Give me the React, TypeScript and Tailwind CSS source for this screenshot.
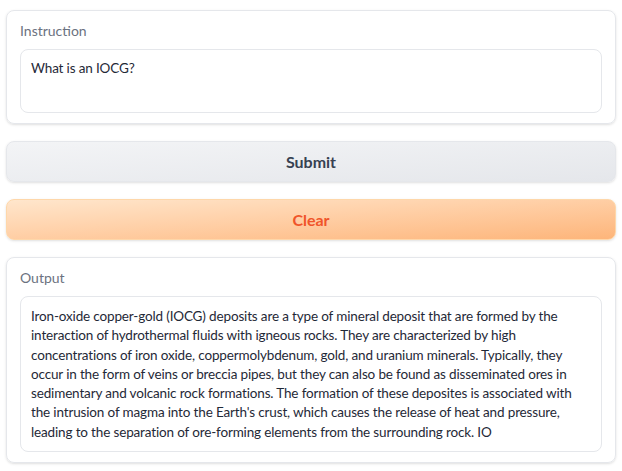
const lines = [
  "Iron-oxide copper-gold (IOCG) deposits are a type of mineral deposit that are formed by the",
  "interaction of hydrothermal fluids with igneous rocks. They are characterized by high",
  "concentrations of iron oxide, coppermolybdenum, gold, and uranium minerals. Typically, they",
  "occur in the form of veins or breccia pipes, but they can also be found as disseminated ores in",
  "sedimentary and volcanic rock formations. The formation of these deposites is associated with",
  "the intrusion of magma into the Earth's crust, which causes the release of heat and pressure,",
  "leading to the separation of ore-forming elements from the surrounding rock. IO",
];

export default function App() {
  const font = { fontFamily: '"Source Sans Pro", Lato, "Noto Sans", sans-serif' };
  return (
    <div className="w-[622px] h-[471px] bg-white px-[6px] pt-[10px]" style={font}>
      <div className="flex flex-col gap-[17px]">
        <div className="rounded-lg border border-[#e5e7eb] px-[13px] pt-[10px] pb-[10px] flex flex-col gap-[9px] shadow-sm">
          <div className="text-[14px] leading-[19px] text-[#6b7280]">Instruction</div>
          <div className="h-[64px] rounded-lg border border-[#e5e7eb] px-[10px] pt-[9px] text-[13.5px] tracking-[-0.15px] leading-[19.3px] text-[#1f2937]">
            What is an IOCG?
          </div>
        </div>
        <div className="h-[41px] rounded-lg border border-[#e5e7eb] bg-gradient-to-br from-[#f3f4f6] to-[#e5e7eb] flex items-center justify-center text-[16px] font-bold text-[#374151] shadow-sm">
          Submit
        </div>
        <div className="h-[41px] rounded-lg border border-[#fed7aa] bg-gradient-to-br from-[#ffe6cc] to-[#fdb57a] flex items-center justify-center text-[16px] font-bold text-[#f0552a] shadow-sm">
          Clear
        </div>
        <div className="rounded-lg border border-[#e5e7eb] px-[13px] pt-[10px] pb-[10px] flex flex-col gap-[9px] shadow-sm">
          <div className="text-[14px] leading-[19px] text-[#6b7280]">Output</div>
          <div className="rounded-lg border border-[#e5e7eb] px-[10px] pt-[10px] pb-[9px] text-[13.5px] tracking-[-0.15px] leading-[19.3px] text-[#1f2937]">
            {lines.map((l, i) => (
              <div key={i} className="whitespace-nowrap">{l}</div>
            ))}
          </div>
        </div>
      </div>
    </div>
  );
}
